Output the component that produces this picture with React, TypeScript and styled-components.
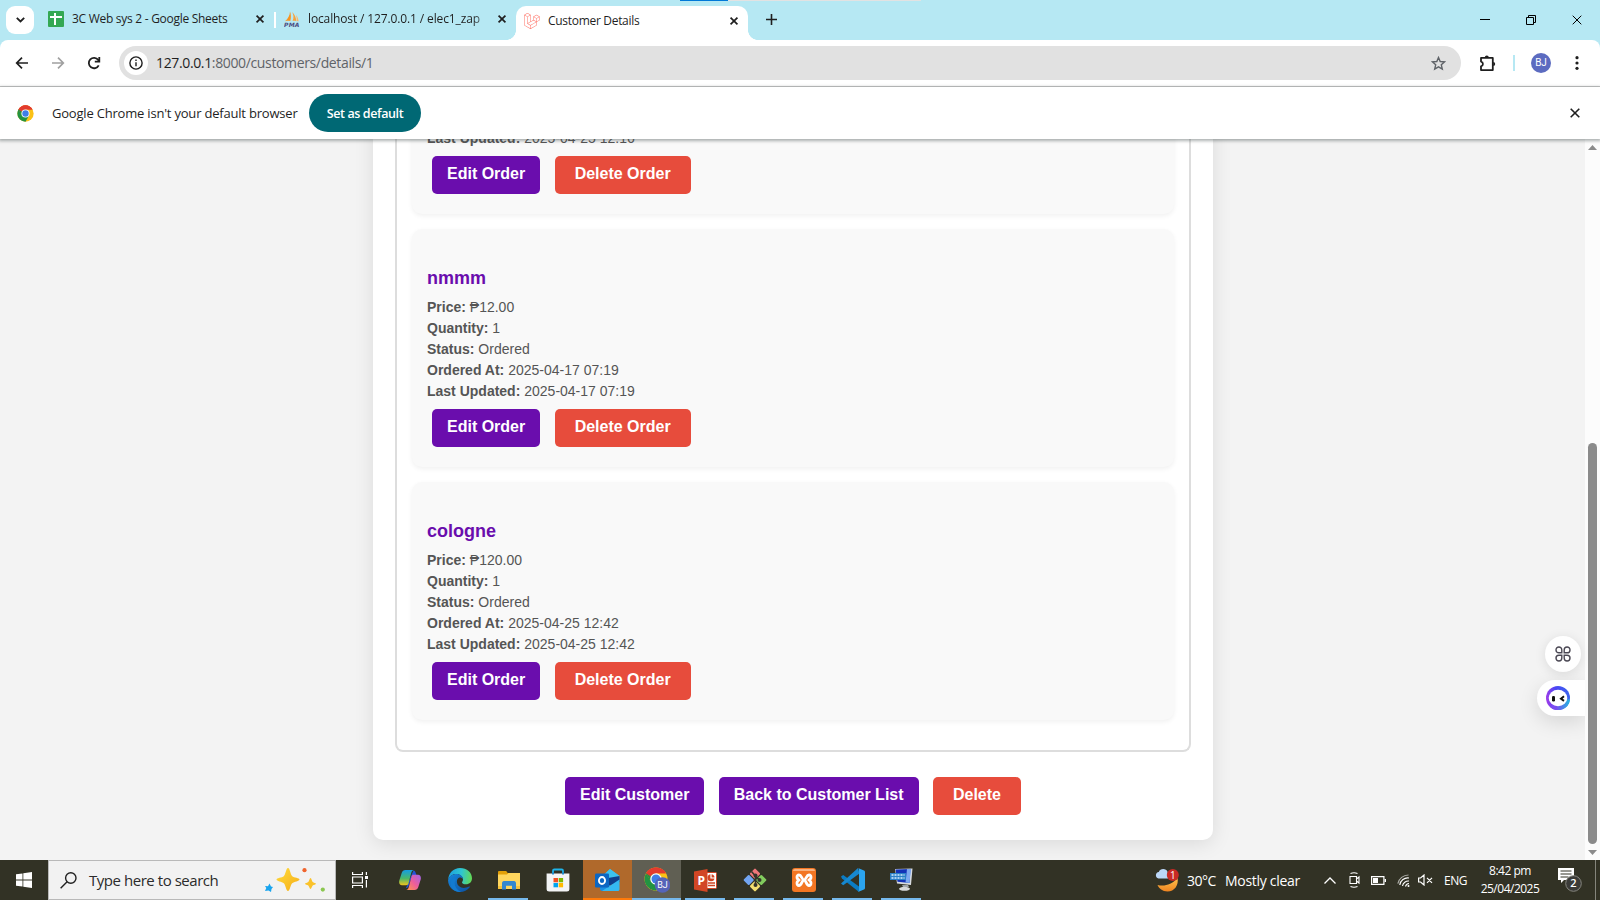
import React from 'react';
import styled, { createGlobalStyle } from 'styled-components';
import { SiLaravel, SiXampp } from 'react-icons/si';

const GlobalStyle = createGlobalStyle`
  *, *::before, *::after { box-sizing: border-box; }
  html, body { margin: 0; padding: 0; }
  body { width: 1600px; height: 900px; overflow: hidden; background: #f3f3f3; }
  svg { display: block; flex: none; }
`;

const uiFont = `"Open Sans", "Noto Sans", sans-serif`;

const Screen = styled.div`
  width: 1600px;
  height: 900px;
  display: flex;
  flex-direction: column;
  overflow: hidden;
  font-family: ${uiFont};
  color: #1f1f1f;
`;

/* ---------- browser tab strip ---------- */

const TabStrip = styled.div`
  height: 40px;
  flex: none;
  display: flex;
  align-items: flex-start;
  background: #b6e8f3;
  position: relative;
`;

const LoadingLine = styled.div`
  position: absolute;
  top: 0;
  left: 680px;
  width: 241px;
  height: 1px;
  background: linear-gradient(90deg, #0078d7 48px, #e2e2e2 48px);
`;

const TabSearch = styled.div`
  width: 28px;
  height: 28px;
  margin: 6px 0 0 6px;
  border-radius: 9px;
  background: #fff;
  display: grid;
  place-items: center;
`;

const Tab = styled.div<{ $width: number; $active?: boolean }>`
  width: ${p => p.$width}px;
  height: ${p => (p.$active ? 34 : 30)}px;
  margin-top: 6px;
  padding: 0 10px 5px 8px;
  display: flex;
  align-items: center;
  ${p => p.$active && `
    background: #fff;
    border-radius: 10px 10px 0 0;
    padding-bottom: 5px;
    position: relative;
    &::before, &::after {
      content: '';
      position: absolute;
      bottom: 0;
      width: 10px;
      height: 10px;
    }
    &::before { left: -10px; background: radial-gradient(circle at 0 0, #b6e8f3 9.6px, #fff 10.2px); }
    &::after { right: -10px; background: radial-gradient(circle at 100% 0, #b6e8f3 9.6px, #fff 10.2px); }
  `}
`;

const TabTitle = styled.span<{ $spacing: number; $fade?: boolean }>`
  margin-left: 8px;
  flex: 1;
  min-width: 0;
  overflow: hidden;
  white-space: nowrap;
  font-size: 12px;
  line-height: 17px;
  letter-spacing: ${p => p.$spacing}px;
  ${p => p.$fade && 'mask-image: linear-gradient(90deg, #000 86%, transparent 100%);'}
`;

const TabDivider = styled.div`
  width: 2px;
  height: 16px;
  margin-top: 12px;
  background: #fff;
`;

const PlusSlot = styled.div`
  margin: 14px 0 0 18px;
`;

const WindowControls = styled.div`
  margin-left: auto;
  height: 40px;
  display: flex;
  align-items: center;
  gap: 36px;
  padding-right: 18px;
`;

/* ---------- toolbar ---------- */

const ToolbarWrap = styled.div`
  flex: none;
  background: #b6e8f3;
`;

const Toolbar = styled.div`
  height: 47px;
  display: flex;
  align-items: center;
  padding: 0 15px 0 15px;
  background: #fff;
  border-bottom: 1px solid #c8c8c8;
  border-radius: 8px 8px 0 0;
`;

const NavIcons = styled.div`
  display: flex;
  align-items: center;
  gap: 22px;
`;

const AddressBar = styled.div`
  width: 1342px;
  height: 34px;
  margin-left: 18px;
  padding: 0 15px 0 5px;
  border-radius: 17px;
  background: #e1e1e1;
  display: flex;
  align-items: center;
`;

const InfoBadge = styled.div`
  width: 24px;
  height: 24px;
  border-radius: 50%;
  background: #fff;
  display: grid;
  place-items: center;
`;

const Url = styled.div`
  margin-left: 8px;
  flex: 1;
  font-size: 14px;
  line-height: 20px;
  letter-spacing: -0.36px;
  color: #5f6368;
  span { color: #1f1f1f; }
`;

const ToolbarActions = styled.div`
  flex: 1;
  display: flex;
  align-items: center;
  padding-left: 18px;
`;

const ThinBar = styled.div`
  width: 2px;
  height: 16px;
  margin: 0 16px 0 17px;
  background: #b6e8f3;
`;

const Avatar = styled.div`
  width: 20px;
  height: 20px;
  border-radius: 50%;
  background: #5c6bc0;
  color: #fff;
  font: 10px/20px Roboto, sans-serif;
  text-align: center;
  margin-right: 24px;
`;

/* ---------- default browser prompt ---------- */

const InfoBar = styled.div`
  height: 52px;
  flex: none;
  display: flex;
  align-items: center;
  padding: 0 20px 0 17px;
  background: #fff;
  position: relative;
  z-index: 2;
  box-shadow: 0 1px 3px 1px rgba(60, 70, 70, 0.42);
`;

const InfoText = styled.span`
  width: 240px;
  margin-left: 18px;
  white-space: nowrap;
  font-size: 13px;
  letter-spacing: -0.2px;
`;

const DefaultButton = styled.button`
  width: 112px;
  height: 38px;
  margin-left: 17px;
  margin-right: auto;
  padding: 0;
  border: 0;
  border-radius: 19px;
  background: #006874;
  color: #fff;
  font: 600 12.5px ${uiFont};
  letter-spacing: -0.4px;
`;

/* ---------- web page ---------- */

const Viewport = styled.div`
  flex: 1;
  min-height: 0;
  display: flex;
  background: #f3f3f3;
  position: relative;
`;

const PageBody = styled.main`
  flex: 1;
  overflow: hidden;
  display: flex;
  justify-content: center;
  align-items: flex-end;
  padding: 0 0 20px 1px;
  font-family: "Liberation Sans", Arial, sans-serif;
`;

const Container = styled.section`
  width: 840px;
  padding: 0 22px 20px;
  background: #fff;
  border-radius: 0 0 10px 10px;
  box-shadow: 0 4px 20px rgba(0, 0, 0, 0.1);
`;

const OrderList = styled.div`
  padding: 0 15px 30px;
  border: 2px solid #ddd;
  border-top: 0;
  border-radius: 0 0 8px 8px;
  display: flex;
  flex-direction: column;
  gap: 15px;
`;

const OrderCard = styled.article`
  padding: 15px;
  border-radius: 10px;
  background: #f9f9f9;
  box-shadow: 0 2px 5px rgba(0, 0, 0, 0.06);
`;

const OrderTitle = styled.h4`
  margin: 24px 0 8px;
  font-size: 18px;
  line-height: 21px;
  color: #6a0dad;
`;

const OrderLine = styled.p`
  margin: 0;
  font-size: 14px;
  line-height: 21px;
  color: #555;
`;

const ButtonRow = styled.div<{ $center?: boolean }>`
  display: flex;
  gap: 14.4px;
  padding: ${p => (p.$center ? '25px 0 5px' : '7px 5px 5px')};
  justify-content: ${p => (p.$center ? 'center' : 'flex-start')};
`;

const ActionButton = styled.button<{ $danger?: boolean }>`
  height: 38px;
  padding: 0 ${p => (p.$danger ? 20 : 15)}px 2px;
  border: 0;
  border-radius: 5px;
  background: ${p => (p.$danger ? '#e74c3c' : '#6a0dad')};
  color: #fff;
  font: bold 16px "Liberation Sans", Arial, sans-serif;
`;

const ScrollTrack = styled.div`
  width: 15px;
  padding: 6px 0 5px;
  background: #fcfcfc;
  display: flex;
  flex-direction: column;
  align-items: center;
`;

const ScrollThumb = styled.div`
  width: 9px;
  height: 401px;
  margin: auto 0 6px;
  border-radius: 5px;
  background: #8b8b8b;
`;

const FloatGrid = styled.div`
  position: absolute;
  right: 19px;
  top: 497px;
  width: 36px;
  height: 36px;
  border-radius: 50%;
  background: #fff;
  box-shadow: 0 2px 12px rgba(0, 0, 0, 0.1);
  display: grid;
  place-items: center;
`;

const FloatBot = styled.div`
  position: absolute;
  right: 15px;
  top: 541px;
  width: 48px;
  height: 36px;
  padding-left: 9px;
  border-radius: 18px 0 0 18px;
  background: #fff;
  box-shadow: 0 6px 20px rgba(0, 0, 0, 0.12);
  clip-path: inset(-40px 0 -40px -40px);
  display: flex;
  align-items: center;
`;

/* ---------- taskbar ---------- */

const Taskbar = styled.footer`
  height: 40px;
  flex: none;
  display: flex;
  background: #323225;
  color: #fff;
  position: relative;
`;

const StartSlot = styled.div`
  width: 48px;
  display: grid;
  place-items: center;
`;

const SearchBox = styled.div`
  width: 288px;
  height: 40px;
  padding: 0 9px 0 11px;
  border: 1px solid #b9b9b9;
  background: #f2f2f2;
  display: flex;
  align-items: center;
`;

const SearchText = styled.span`
  flex: 1;
  margin-left: 12px;
  white-space: nowrap;
  font-size: 15px;
  letter-spacing: -0.46px;
  color: #2b2b2b;
`;

const TaskItem = styled.div<{ $tone?: string; $line?: string; $full?: boolean; $width?: number }>`
  width: ${p => p.$width ?? 49}px;
  height: 40px;
  display: flex;
  align-items: center;
  justify-content: center;
  position: relative;
  background: ${p => p.$tone ?? 'transparent'};
  ${p => p.$line && `
    &::after {
      content: '';
      position: absolute;
      left: ${p.$full ? 0 : 4}px;
      right: ${p.$full ? 0 : 5}px;
      bottom: 0;
      height: 2px;
      background: ${p.$line};
    }
  `}
`;

const Tray = styled.div`
  margin-left: auto;
  display: flex;
  align-items: center;
`;

const TrayText = styled.span<{ $size: number; $spacing: number; $width: number; $gap: number }>`
  width: ${p => p.$width}px;
  margin-left: ${p => p.$gap}px;
  white-space: nowrap;
  font-size: ${p => p.$size}px;
  letter-spacing: ${p => p.$spacing}px;
`;

const TrayIcons = styled.div`
  display: flex;
  align-items: center;
  margin-left: 23px;
`;

const TrayIcon = styled.div<{ $gap?: number }>`
  margin-left: ${p => p.$gap ?? 0}px;
`;

const Clock = styled.div`
  width: 66px;
  margin-left: 9px;
  padding-bottom: 1px;
  text-align: center;
  font-size: 12px;
  line-height: 17.5px;
  letter-spacing: -0.5px;
  white-space: nowrap;
`;

const Notifications = styled.div`
  width: 26px;
  margin: 0 12px 0 14px;
`;

const DesktopPeek = styled.div`
  width: 5px;
  height: 40px;
  border-left: 1px solid #85857c;
`;

/* ---------- drawings ---------- */

const CloseIcon = ({ size = 8, width = 1.7, color = '#1f1f1f' }) => (
  <svg width={size} height={size} viewBox="0 0 10 10" stroke={color} strokeWidth={(width * 10) / size} overflow="visible">
    <path d="M.7 .7 9.3 9.3M9.3 .7 .7 9.3" />
  </svg>
);

const ChromeLogo = ({ size }: { size: number }) => (
  <svg width={size} height={size} viewBox="0 0 48 48">
    <circle cx="24" cy="24" r="23" fill="#fbc116" />
    <path d="M24 24 4.1 12.5A23 23 0 0 1 43.9 12.5H24z" fill="#e33b2e" />
    <path d="M4.1 12.5A23 23 0 0 0 24 47L34 29.5 24 24 14 29.5z" fill="#229342" />
    <path d="M4.1 12.5 14 29.5 24 13.5z" fill="#229342" />
    <path d="M4.1 12.5A23 23 0 0 1 43.9 12.5H24a11.5 11.5 0 0 0-10 5.8L12 25z" fill="#e33b2e" />
    <path d="M4.1 12.5 14 29.7 15 20z" fill="#229342" />
    <circle cx="24" cy="24" r="11.5" fill="#fff" />
    <circle cx="24" cy="24" r="9" fill="#3f7ee8" />
  </svg>
);

const SheetsIcon = () => (
  <svg width="16" height="16" viewBox="0 0 16 16">
    <rect width="16" height="16" rx="1" fill="#34a853" />
    <path d="M2 6h12M7 2v12" stroke="#fff" strokeWidth="2" />
  </svg>
);

const PmaIcon = () => (
  <svg width="16" height="16" viewBox="0 0 16 16">
    <path d="M6 .5C6 4 4 8 1 10.2 3 9.8 5 9.8 6.3 10 7.2 7 7 3 6 .5z" fill="#f7931e" />
    <path d="M8 1c1.7 2.4 2 6 .6 9 1.2-.3 2.8-.2 3.6.2C12.200 6.500 10.500 3 8 1z" fill="#f9a13a" />
    <path d="M12 4c1.500 1.500 2.300 4 2.600 6.300l-2-.2C12.900 8 12.700 6 12 4z" fill="#fbb768" />
    <text x="0" y="15.6" fontSize="6" fontWeight="700" fontStyle="italic" fontFamily="DejaVu Sans" textLength="15.500" fill="#4a4a80">PMA</text>
  </svg>
);

const BackArrow = ({ color, flip }: { color: string; flip?: boolean }) => (
  <svg width="14" height="14" viewBox="0 0 14 14" fill="none" stroke={color} strokeWidth="1.7" transform={flip ? 'scale(-1 1)' : undefined}>
    <path d="M13 7H2M7 1.700 1.700 7 7 12.300" />
  </svg>
);

const ReloadIcon = () => (
  <svg width="14" height="14" viewBox="0 0 14 14" fill="none" stroke="#1f1f1f" strokeWidth="1.800">
    <path d="M11.700 9.300A5.200 5.200 0 1 1 11.200 3.900L12 5" />
    <path d="M12.300 1v4.600H7.800" />
  </svg>
);

const InfoIcon = () => (
  <svg width="14" height="14" viewBox="0 0 14 14" fill="none" stroke="#1f1f1f" strokeWidth="1.400">
    <circle cx="7" cy="7" r="6.100" />
    <path d="M7 6.200v4M7 3.500V5" />
  </svg>
);

const StarIcon = () => (
  <svg width="15" height="15" viewBox="0 0 15 15" fill="none" stroke="#5f6368" strokeWidth="1.400">
    <path d="M7.500 1.500 9.200 5.500l4.400.4-3.300 2.900 1 4.300-3.800-2.300-3.800 2.300 1-4.300-3.300-2.900 4.400-.4z" />
  </svg>
);

const PuzzleIcon = () => (
  <svg width="17" height="17" viewBox="0 0 17 17">
    <path d="M2 2.900h11.800v12.200H2v-3.800a2.400 2.400 0 0 0 0-4.700z" fill="none" stroke="#1f1f1f" strokeWidth="1.800" strokeLinejoin="round" />
    <path d="M5.800 2.500a2 2 0 0 1 4 0zM14.200 7a2 2 0 0 1 0 4z" fill="#1f1f1f" />
  </svg>
);

const MenuDots = () => (
  <svg width="4" height="14" viewBox="0 0 4 14" fill="#1f1f1f">
    <circle cx="2" cy="1.700" r="1.600" /><circle cx="2" cy="7" r="1.600" /><circle cx="2" cy="12.300" r="1.600" />
  </svg>
);

const RestoreIcon = () => (
  <svg width="10" height="10" viewBox="0 0 10 10" fill="none" stroke="#000">
    <path d="M.5 2.500h7v7h-7zM2.500 2.500v-2h7v7h-2" />
  </svg>
);

const GridIcon = () => (
  <svg width="16" height="16" viewBox="0 0 16 16" fill="none" stroke="#4b4854" strokeWidth="1.400">
    <path d="M6.800 6.800H3.900A2.900 2.900 0 1 1 6.800 3.900zM9.200 6.800V3.900a2.900 2.900 0 1 1 2.900 2.900zM6.800 9.200v2.900a2.900 2.900 0 1 1-2.900-2.900zM9.200 9.200h2.900a2.900 2.900 0 1 1-2.900 2.900z" />
  </svg>
);

const BotIcon = () => (
  <svg width="24" height="24" viewBox="0 0 24 24">
    <defs>
      <linearGradient id="bot" x1="0" y1=".7" x2="1" y2=".6">
        <stop offset="0" stopColor="#a43ce8" /><stop offset=".45" stopColor="#4b46f5" /><stop offset="1" stopColor="#3a63ed" />
      </linearGradient>
      <linearGradient id="botBase" x1="0" y1="0" x2="1" y2="0">
        <stop offset=".3" stopColor="#7a4cf0" /><stop offset="1" stopColor="#20b9e0" />
      </linearGradient>
    </defs>
    <circle cx="12" cy="12" r="12" fill="url(#bot)" />
    <path d="M4 21A12 12 0 0 0 24 13.500L12 12z" fill="url(#botBase)" />
    <ellipse cx="12" cy="12" rx="9.300" ry="8.200" fill="#fff" />
    <rect x="6" y="10" width="3" height="5.500" rx="1.200" fill="#111" />
    <path d="M18 10.300 15 12.700l3 2.200" fill="none" stroke="#111" strokeWidth="2" />
  </svg>
);

const WindowsIcon = () => (
  <svg width="16" height="16" viewBox="0 0 16 16" fill="#fff">
    <path d="M0 2.300 6.500 1.400v6.200H0zM7.300 1.300 16 0v7.600H7.300zM0 8.400h6.500v6.200L0 13.700zM7.300 8.400H16V16l-8.700-1.300z" />
  </svg>
);

const SearchIcon = () => (
  <svg width="17" height="17" viewBox="0 0 17 17" fill="none" stroke="#222" strokeWidth="1.400">
    <circle cx="10.800" cy="6" r="5.200" /><path d="M7.100 9.700.6 16.200" />
  </svg>
);

const Sparkles = () => (
  <svg width="62" height="26" viewBox="0 0 62 26">
    <defs>
      <linearGradient id="spark" x1="0" y1="0" x2="1" y2="1"><stop stopColor="#ffdc3c" /><stop offset="1" stopColor="#f5ad18" /></linearGradient>
    </defs>
    <path d="M24 1c2 0 2.300 6.500 4.200 8.200C30 10.800 35.500 10.800 35.500 12.500S30 14.600 28.200 16.200C26.300 18 26 24 24 24s-2.300-6-4.200-7.800C18 14.600 12.500 14.200 12.500 12.500S18 10.800 19.800 9.200C21.700 7.500 22 1 24 1z" fill="url(#spark)" />
    <path d="M46.500 11c1 0 1.300 3 2.200 4s3.300.8 3.300 1.700-2.400.9-3.300 1.900-1.200 3.400-2.200 3.400-1.200-2.400-2.200-3.400-3.300-1-3.300-1.900 2.400-.7 3.300-1.700 1.200-4 2.200-4z" fill="#fac22b" />
    <path d="M5.500 16.500 7 19.500 9 20 7.500 22 7 25 4.500 23.500 1 24 2.300 21 1 19 4 19.300z" fill="#18a4ee" />
    <circle cx="40.500" cy="3.200" r="2.100" fill="#f0642d" /><circle cx="58.800" cy="22.600" r="2.100" fill="#8bc750" />
  </svg>
);

const TaskViewIcon = () => (
  <svg width="16" height="16" viewBox="0 0 16 16" fill="none" stroke="#fff" strokeWidth="1.200">
    <path d="M.6 0v2.500h9.800V0M.6 5h9.800v6H.6zM.6 16v-2.500h9.800V16M14.400 0v3M14.400 8v7.500" /><path d="M13 4h3v3h-3z" fill="#fff" stroke="none" />
  </svg>
);

const CopilotIcon = () => (
  <svg width="22" height="22" viewBox="0 0 22 22">
    <defs>
      <linearGradient id="copA" x1="0" y1="0" x2="0" y2="1"><stop stopColor="#149de5" /><stop offset=".55" stopColor="#48b86b" /><stop offset="1" stopColor="#f0c51d" /></linearGradient>
      <linearGradient id="copB" x1="1" y1="0" x2="0" y2="1"><stop stopColor="#9d65ea" /><stop offset=".5" stopColor="#ee5d9b" /><stop offset="1" stopColor="#ff9a48" /></linearGradient>
    </defs>
    <path d="M14.500 1.500c1.300 0 1.800 1 2.200 2.500l.7 2h-4L9.500 17c-.5 1.600-1.200 2-2.500 2z" fill="#2354d8" />
    <path d="M6.500 1h8.500c-1.700.3-2.300 1.200-2.800 3L9.500 14.500c-.4 1.300-1 1.700-2.200 1.700H3C.5 16.200-.3 14 .3 11.500L2.700 4C3.300 2 4.500 1 6.500 1z" fill="url(#copA)" />
    <path d="M15.500 21H7c1.700-.3 2.300-1.200 2.800-3l2.700-10.500c.4-1.300 1-1.700 2.200-1.700H19c2.500 0 3.300 2.200 2.700 4.700L19.300 18c-.6 2-1.800 3-3.800 3z" fill="url(#copB)" />
  </svg>
);

const EdgeIcon = () => (
  <svg width="24" height="24" viewBox="0 0 24 24">
    <defs>
      <linearGradient id="edgeTop" x1="0" y1=".3" x2="1" y2=".4"><stop stopColor="#1c9fe0" /><stop offset=".55" stopColor="#2fc6d0" /><stop offset="1" stopColor="#62d957" /></linearGradient>
      <linearGradient id="edgeLow" x1="0" y1="0" x2="1" y2="1"><stop stopColor="#1787dc" /><stop offset="1" stopColor="#0c4f9f" /></linearGradient>
    </defs>
    <path d="M.2 11.500C.6 5 5.500 0 12 0c7 0 12 4.800 12 10.300 0 3.700-2.600 6-6 6-2.600 0-4-1-4-1.800 0-.7 1-1.300 1-3C15 8.500 12 6 8.500 6 4.500 6 1.500 8 .2 11.500z" fill="url(#edgeTop)" />
    <path d="M.1 12C1.300 8 4.500 6 8.500 6c3.500 0 6.400 2.300 6.500 5-1-1.200-2.400-1.700-3.500-1.400-1.600.4-2.700 2.200-2.600 4.200.1 4.200 4.500 7.200 9.500 5.700 1.200-.4 2-.8 2.800-1 .6-.1.900.3.500.8C19.500 22.300 15.800 24 12 24 5.500 24-.2 18.800.1 12z" fill="url(#edgeLow)" />
    <path d="M9.100 10.800C5 13.500 6 20.500 13 23.900 5.500 24.300 2 19 2.700 14.500 3.300 11 6 9 9.100 10.800z" fill="#137bd0" />
  </svg>
);

const FolderIcon = () => (
  <svg width="22" height="19" viewBox="0 0 22 19">
    <path d="M0 1.200C0 .5.500 0 1.200 0h7l1.500 2H22v4H0z" fill="#e3a008" />
    <path d="M0 3.500h9l1.500-1.500H22v16H0z" fill="#ffd65e" />
    <path d="M4 18.500v-6C4 11 4.600 10 6 10h10c1.400 0 2 1 2 2.500v6h-4v-3.700H8v3.700z" fill="#3487cf" />
    <path d="M0 15h4v3H0zM18 15h4v3h-4z" fill="#f8c33c" />
  </svg>
);

const StoreIcon = () => (
  <svg width="24" height="24" viewBox="0 0 24 24">
    <path d="M7 6V2.800C7 2 7.500 1.500 8.300 1.500h7.400c.8 0 1.300.5 1.300 1.300V6" fill="none" stroke="#1eb4e9" strokeWidth="1.800" />
    <path d="M.6 5.500h22.800V21a2.500 2.500 0 0 1-2.500 2.500H3.100A2.500 2.500 0 0 1 .6 21z" fill="#f3f4f5" />
    <path d="M7.500 10H12v4.300H7.500z" fill="#f25022" /><path d="M12.700 10h4.400v4.300h-4.400z" fill="#7fba00" /><path d="M7.500 15H12v4.300H7.500z" fill="#00a4ef" /><path d="M12.700 15h4.400v4.300h-4.400z" fill="#ffb900" />
    <path d="M6.100 5.500h1.800M16.100 5.500h1.800" stroke="#1583c9" strokeWidth="2" />
  </svg>
);

const OutlookIcon = () => (
  <svg width="25" height="23" viewBox="0 0 25 23">
    <path d="M5 9 15 0l9.500 7v5H5z" fill="#32b8ec" /><path d="M8 5h12v9H8z" fill="#1490df" /><path d="M15 0l9.500 7-5 4L8 7z" fill="#3cc3ef" />
    <path d="M24.500 7v6L13 17V9z" fill="#0f3f8c" /><path d="M5 11l19.500 11H7c-1.200 0-2-.8-2-2z" fill="#1a8ee0" /><path d="M24.500 10.500V20c0 1.500-.8 2-2 2H7z" fill="#35b9f1" />
    <rect x="0" y="4.500" width="14" height="14" rx="1.200" fill="#0c66c2" />
    <ellipse cx="7" cy="11.500" rx="3.100" ry="3.500" fill="none" stroke="#fff" strokeWidth="1.800" />
  </svg>
);

const ChromeTaskIcon = () => (
  <svg width="26" height="26" viewBox="0 0 26 26">
    <g transform="scale(.5)"><ChromeLogo size={48} /></g>
    <circle cx="18.500" cy="18" r="7.800" fill="#5564b8" />
    <text x="18.500" y="21.300" fontSize="9" fontFamily="Roboto" textAnchor="middle" fill="#fff">BJ</text>
  </svg>
);

const PowerPointIcon = () => (
  <svg width="23" height="23" viewBox="0 0 23 23">
    <path d="M12 3.500h9.500c.6 0 1 .4 1 1v14c0 .6-.4 1-1 1H12z" fill="#fff" stroke="#d04423" />
    <circle cx="17" cy="8.800" r="3.500" fill="#d04423" /><path d="M17 5v4h4" stroke="#fff" fill="none" strokeWidth="1.200" /><path d="M14 14h7M14 16.500h7" stroke="#d04423" strokeWidth="1.300" />
    <path d="M0 2.500 13.500 0v23L0 20.500z" fill="#d24625" />
    <text x="3.400" y="16" fontSize="12" fontWeight="700" fontFamily="Open Sans" fill="#fff">P</text>
  </svg>
);

const GitIcon = () => (
  <svg width="24" height="24" viewBox="0 0 24 24">
    <g transform="rotate(45 12 12)">
      <rect x="3.700" y="3.700" width="7.700" height="7.700" rx="1" fill="#f0777a" /><rect x="12.600" y="3.700" width="7.700" height="7.700" rx="1" fill="#82cc5e" />
      <rect x="3.700" y="12.600" width="7.700" height="7.700" rx="1" fill="#72a5f2" /><rect x="12.600" y="12.600" width="7.700" height="7.700" rx="1" fill="#f3df70" />
    </g>
    <path d="M8.500 3.500 12.500 8v9M12.500 8l4 4" stroke="#34342b" strokeWidth="1.600" fill="none" />
    <circle cx="12.500" cy="7.500" r="2" fill="#34342b" /><circle cx="16.500" cy="12" r="2" fill="#34342b" /><circle cx="12.500" cy="17" r="2" fill="#34342b" />
  </svg>
);

const XamppIcon = () => (
  <svg width="24" height="24" viewBox="0 0 24 24">
    <rect width="24" height="24" rx="3" fill="#f37623" />
    <path d="M1 3a2 2 0 0 1 2-2h18a2 2 0 0 1 2 2H1z" fill="#f9b27f" />
    <path d="M12 12c-2.200 0-2.300-5-5-5S4.300 11 7.200 12C4.300 13 4.300 17.500 7 17.500S9.800 12 12 12s2.300 5.500 5 5.500 2.700-4.500-.2-5.500C19.700 11 19.700 7 17 7s-2.800 5-5 5z" fill="none" stroke="#fff" strokeWidth="2.800" strokeLinejoin="round" />
  </svg>
);

const CodeIcon = () => (
  <svg width="24" height="24" viewBox="0 0 24 24">
    <path d="M0 8.500 2.200 7 18 18.500V24L1 10.500z" fill="#0b7cc4" /><path d="M0 15.500 17 0l1.500 5.500L2.200 17.200z" fill="#1688d0" />
    <path d="M17 0l6 2.600c.6.300 1 .8 1 1.500v15.800c0 .7-.4 1.200-1 1.500L17 24c.6-.4 1-1 1-2V2c0-1-.4-1.600-1-2z" fill="#2ba4ef" />
  </svg>
);

const MonitorIcon = () => (
  <svg width="24" height="24" viewBox="0 0 24 24">
    <path d="M5 1 22.500.5 21 17 7 15.500z" fill="#d7dbe0" /><path d="M5.500 1.500 20.500 1 19.500 15 7.500 13.700z" fill="#1232b8" />
    <path d="M17 1h4l-1.500 14-4-.5z" fill="#7da8ef" />
    <path d="M12 17h6l1 2H13z" fill="#9fa4aa" /><ellipse cx="14.500" cy="20.800" rx="5.500" ry="2" fill="#d6d8da" />
    <rect x="0" y="5" width="16" height="7" fill="#2c80c7" /><path d="M1.500 7h13M1.500 10h13" stroke="#d6edff" strokeWidth="1.600" strokeDasharray="2 1" />
  </svg>
);

const WeatherIcon = () => (
  <svg width="24" height="23" viewBox="0 0 24 23">
    <defs><linearGradient id="moon" x1="0" y1="0" x2="0" y2="1"><stop stopColor="#ffc24d" /><stop offset="1" stopColor="#ee8420" /></linearGradient></defs>
    <path d="M22.500 9c1.500 7-3 13.500-10 13.500C7.500 22.500 4 19.500 2.500 16c7 1.500 14 0 20-7z" fill="url(#moon)" />
    <path d="M3.500 9.500a3.300 3.300 0 0 1 .3-6.500 4.800 4.800 0 0 1 8.800 0L13 9.500z" fill="#bcd7f7" />
    <circle cx="17.800" cy="6" r="6" fill="#c92a25" />
    <text x="17.800" y="9.700" fontSize="10" fontFamily="Open Sans" textAnchor="middle" fill="#fff">1</text>
  </svg>
);

const ChevronUp = () => (
  <svg width="12" height="7" viewBox="0 0 12 7" fill="none" stroke="#fff" strokeWidth="1.300"><path d="M.5 6.500 6 1l5.500 5.500" /></svg>
);

const MeetIcon = () => (
  <svg width="11" height="16" viewBox="0 0 11 16" fill="none" stroke="#fff" strokeWidth="1.100"><path d="M1 4.500h6.500v7H1zM7.500 7 10 5v6L7.500 9M1.500 1.500Q5 0 8.500 1.500M1.500 14.500Q5 16 8.500 14.500" /></svg>
);

const BatteryIcon = () => (
  <svg width="15" height="9" viewBox="0 0 15 9"><path d="M.6.6h12.300v7.800H.6zM14.400 3v3" fill="none" stroke="#fff" strokeWidth="1.200" /><path d="M2 2h5v5H2z" fill="#fff" /></svg>
);

const WifiIcon = () => (
  <svg width="13" height="13" viewBox="0 0 13 13" fill="none" stroke="#fff" strokeWidth="1.100"><path d="M.8 9.500A11 11 0 0 1 11.500 1" opacity=".6" /><path d="M2.800 11A8 8 0 0 1 12 4M5.500 12A6 6 0 0 1 12 7M8.500 12.500A4 4 0 0 1 12 9.500" /><circle cx="11.500" cy="12" r="1" fill="#fff" stroke="none" /></svg>
);

const MuteIcon = () => (
  <svg width="15" height="12" viewBox="0 0 15 12" fill="none" stroke="#fff" strokeWidth="1.200"><path d="M.6 4h2L6 1v10L2.600 8h-2zM9 3.800l5 5M14 3.800l-5 5" /></svg>
);

const NoteIcon = () => (
  <svg width="26" height="26" viewBox="0 0 26 26">
    <path d="M1 1h16v12H7l-3 3v-3H1z" fill="#fff" /><path d="M3.500 4h11M3.500 7h11M3.500 10h8" stroke="#323225" strokeWidth="1.100" />
    <circle cx="16.500" cy="16.500" r="7.800" fill="#3b3b38" stroke="#86867f" />
    <text x="16.500" y="20.300" fontSize="11" fontWeight="600" fontFamily="Open Sans" textAnchor="middle" fill="#fff">2</text>
  </svg>
);

/* ---------- content ---------- */

type Order = { name: string; price: string; date: string };

const orders: Order[] = [
  { name: 'nmmm', price: '₱12.00', date: '2025-04-17 07:19' },
  { name: 'cologne', price: '₱120.00', date: '2025-04-25 12:42' },
];

const OrderButtons = () => (
  <ButtonRow>
    <ActionButton>Edit Order</ActionButton>
    <ActionButton $danger>Delete Order</ActionButton>
  </ButtonRow>
);

const lineBlue = '#76b9ed';

export default function App() {
  return (
    <Screen>
      <GlobalStyle />
      <TabStrip>
        <LoadingLine />
        <TabSearch>
          <svg width="9" height="6" viewBox="0 0 9 6" fill="none" stroke="#1f1f1f" strokeWidth="1.800"><path d="M.8.8 4.500 4.500 8.200.8" /></svg>
        </TabSearch>
        <Tab $width={234} style={{ marginLeft: 6 }}>
          <SheetsIcon />
          <TabTitle $spacing={-0.28}>3C Web sys 2 - Google Sheets</TabTitle>
          <CloseIcon />
        </Tab>
        <TabDivider />
        <Tab $width={240}>
          <PmaIcon />
          <TabTitle $spacing={-0.13} $fade>localhost / 127.0.0.1 / elec1_zap</TabTitle>
          <CloseIcon />
        </Tab>
        <Tab $width={232} $active>
          <SiLaravel size={16} color="#ff6f63" />
          <TabTitle $spacing={-0.3}>Customer Details</TabTitle>
          <CloseIcon />
        </Tab>
        <PlusSlot>
          <svg width="11" height="11" viewBox="0 0 11 11" stroke="#1f1f1f" strokeWidth="1.600"><path d="M0 5.500h11M5.500 0v11" /></svg>
        </PlusSlot>
        <WindowControls>
          <svg width="10" height="10" viewBox="0 0 10 10" stroke="#000"><path d="M0 4.500h10" /></svg>
          <RestoreIcon />
          <CloseIcon size={10} width={1} color="#000" />
        </WindowControls>
      </TabStrip>

      <ToolbarWrap>
        <Toolbar>
          <NavIcons>
            <BackArrow color="#1f1f1f" />
            <BackArrow color="#a0a0a0" flip />
            <ReloadIcon />
          </NavIcons>
          <AddressBar>
            <InfoBadge><InfoIcon /></InfoBadge>
            <Url><span>127.0.0.1</span>:8000/customers/details/1</Url>
            <StarIcon />
          </AddressBar>
          <ToolbarActions>
            <PuzzleIcon />
            <ThinBar />
            <Avatar>BJ</Avatar>
            <MenuDots />
          </ToolbarActions>
        </Toolbar>
      </ToolbarWrap>

      <InfoBar>
        <ChromeLogo size={17} />
        <InfoText>Google Chrome isn't your default browser</InfoText>
        <DefaultButton>Set as default</DefaultButton>
        <CloseIcon size={10} width={1.6} />
      </InfoBar>

      <Viewport>
        <PageBody>
          <Container>
            <OrderList>
              <OrderCard>
                <OrderLine><b>Last Updated:</b> 2025-04-25 12:16</OrderLine>
                <OrderButtons />
              </OrderCard>
              {orders.map(o => (
                <OrderCard key={o.name}>
                  <OrderTitle>{o.name}</OrderTitle>
                  <OrderLine><b>Price:</b> {o.price}</OrderLine>
                  <OrderLine><b>Quantity:</b> 1</OrderLine>
                  <OrderLine><b>Status:</b> Ordered</OrderLine>
                  <OrderLine><b>Ordered At:</b> {o.date}</OrderLine>
                  <OrderLine><b>Last Updated:</b> {o.date}</OrderLine>
                  <OrderButtons />
                </OrderCard>
              ))}
            </OrderList>
            <ButtonRow $center>
              <ActionButton>Edit Customer</ActionButton>
              <ActionButton>Back to Customer List</ActionButton>
              <ActionButton $danger>Delete</ActionButton>
            </ButtonRow>
          </Container>
        </PageBody>
        <ScrollTrack>
          <svg width="9" height="5" viewBox="0 0 9 5" fill="#8b8b8b"><path d="M4.500 0 9 5H0z" /></svg>
          <ScrollThumb />
          <svg width="9" height="5" viewBox="0 0 9 5" fill="#8b8b8b"><path d="M0 0h9L4.500 5z" /></svg>
        </ScrollTrack>
        <FloatGrid><GridIcon /></FloatGrid>
        <FloatBot><BotIcon /></FloatBot>
      </Viewport>

      <Taskbar>
        <StartSlot><WindowsIcon /></StartSlot>
        <SearchBox>
          <SearchIcon />
          <SearchText>Type here to search</SearchText>
          <Sparkles />
        </SearchBox>
        <TaskItem $width={48}><TaskViewIcon /></TaskItem>
        <TaskItem $width={52}><CopilotIcon /></TaskItem>
        <TaskItem $width={48}><EdgeIcon /></TaskItem>
        <TaskItem $line={lineBlue}><FolderIcon /></TaskItem>
        <TaskItem $width={50}><StoreIcon /></TaskItem>
        <TaskItem $width={49} $tone="#b0692b" $line="#ff7a0a" $full><OutlookIcon /></TaskItem>
        <TaskItem $width={49} $tone="#605f53" $line={lineBlue} $full><ChromeTaskIcon /></TaskItem>
        <TaskItem $line={lineBlue}><PowerPointIcon /></TaskItem>
        <TaskItem $line={lineBlue}><GitIcon /></TaskItem>
        <TaskItem $line={lineBlue}><XamppIcon /></TaskItem>
        <TaskItem $line={lineBlue}><CodeIcon /></TaskItem>
        <TaskItem $line={lineBlue}><MonitorIcon /></TaskItem>
        <Tray>
          <WeatherIcon />
          <TrayText $size={14} $spacing={-0.5} $width={30} $gap={8}>30°C</TrayText>
          <TrayText $size={14} $spacing={-0.3} $width={76} $gap={8}>Mostly clear</TrayText>
          <TrayIcons>
            <ChevronUp />
            <TrayIcon $gap={13}><MeetIcon /></TrayIcon>
            <TrayIcon $gap={11}><BatteryIcon /></TrayIcon>
            <TrayIcon $gap={11}><WifiIcon /></TrayIcon>
            <TrayIcon $gap={8}><MuteIcon /></TrayIcon>
          </TrayIcons>
          <TrayText $size={12} $spacing={-0.5} $width={24} $gap={11}>ENG</TrayText>
          <Clock>8:42 pm<br />25/04/2025</Clock>
          <Notifications><NoteIcon /></Notifications>
          <DesktopPeek />
        </Tray>
      </Taskbar>
    </Screen>
  );
}
